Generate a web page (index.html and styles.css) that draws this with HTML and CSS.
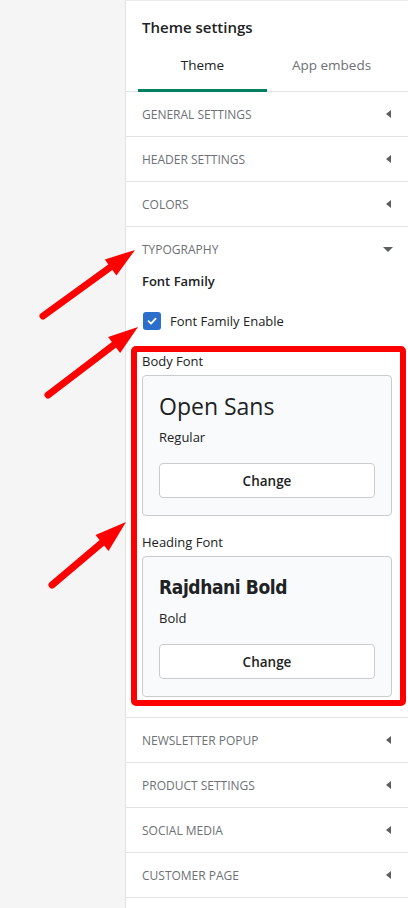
FILE: index.html
```html
<!DOCTYPE html>
<html>
<head>
    <title>Theme settings</title>
    <link rel="stylesheet" href="styles.css">
</head>
<body>
    <div class="page">
        <div class="canvas"></div>

        <aside class="panel">
            <div class="panel-header">
                <h1 class="panel-title">Theme settings</h1>
                <div class="tabs">
                    <div class="tab active">Theme</div>
                    <div class="tab">App embeds</div>
                </div>
            </div>

            <div class="section">
                <div class="section-head"><span>General settings</span><i class="caret"></i></div>
            </div>
            <div class="section">
                <div class="section-head"><span>Header settings</span><i class="caret"></i></div>
            </div>
            <div class="section">
                <div class="section-head"><span>Colors</span><i class="caret"></i></div>
            </div>

            <!-- open section -->
            <div class="section open">
                <div class="section-head"><span>Typography</span><i class="caret down"></i></div>
                <div class="section-body">
                    <div class="field-title">Font Family</div>
                    <label class="checkbox">
                        <span class="box">
                            <svg width="12" height="12" viewBox="0 0 12 12"><path d="M2.5 6.2 L5 8.6 L9.6 3.6" fill="none" stroke="#fff" stroke-width="1.8" stroke-linecap="round" stroke-linejoin="round"/></svg>
                        </span>
                        Font Family Enable
                    </label>

                    <div class="highlight">
                        <div class="font-label">Body Font</div>
                        <div class="font-card">
                            <div class="font-name">Open Sans</div>
                            <div class="font-style">Regular</div>
                            <button class="btn">Change</button>
                        </div>

                        <div class="font-label second">Heading Font</div>
                        <div class="font-card">
                            <div class="font-name heading">Rajdhani Bold</div>
                            <div class="font-style">Bold</div>
                            <button class="btn">Change</button>
                        </div>
                    </div>
                </div>
            </div>

            <div class="section">
                <div class="section-head"><span>Newsletter popup</span><i class="caret"></i></div>
            </div>
            <div class="section">
                <div class="section-head"><span>Product settings</span><i class="caret"></i></div>
            </div>
            <div class="section">
                <div class="section-head"><span>Social media</span><i class="caret"></i></div>
            </div>
            <div class="section">
                <div class="section-head"><span>Customer page</span><i class="caret"></i></div>
            </div>
        </aside>

        <!-- annotation arrows -->
        <svg class="arrows" width="408" height="908" viewBox="0 0 408 908">
            <g stroke="#ff0000" stroke-width="7" stroke-linecap="round" fill="#ff0000">
                <line x1="43" y1="316" x2="112" y2="266"/>
                <line x1="48" y1="395" x2="115" y2="344"/>
                <line x1="52" y1="585" x2="104" y2="541"/>
            </g>
            <g fill="#ff0000">
                <polygon points="135,250 104.8,259.4 116.4,275.6"/>
                <polygon points="138,327 108.1,337.1 120.1,353.1"/>
                <polygon points="126,522 95.5,535 108.5,551"/>
            </g>
        </svg>
    </div>
</body>
</html>
```

FILE: styles.css
```css
body {
    margin: 0;
    font-family: "Open Sans", "Noto Sans", sans-serif;
    color: #202223;
    background-color: #f5f5f5;
}

.page {
    position: relative;
    display: flex;
    width: 408px;
    min-height: 908px;
}

.canvas {
    width: 125px;
    flex-shrink: 0;
}

.panel {
    flex: 1;
    background-color: #fff;
    border-left: 1px solid #e1e3e5;
    border-top: 1px solid #ebebeb;
    min-height: 907px;
}

.panel-header {
    padding-top: 14px;
    border-bottom: 1px solid #e1e3e5;
}

.panel-title {
    margin: 0 0 2px 16px;
    font-size: 15px;
    line-height: 24px;
    font-weight: 600;
}

.tabs {
    display: flex;
    margin: 0 12px;
}

.tab {
    flex: 1;
    height: 48px;
    line-height: 48px;
    text-align: center;
    font-size: 13.5px;
    color: #6d7175;
    border-bottom: 3px solid transparent;
    margin-bottom: -1px;
}

.tab.active {
    color: #202223;
    border-bottom-color: #008060;
}

.section {
    border-bottom: 1px solid #e1e3e5;
}

.section-head {
    display: flex;
    align-items: center;
    justify-content: space-between;
    height: 44px;
    padding: 0 15px 0 16px;
    font-size: 12px;
    text-transform: uppercase;
    color: #6d7175;
}

.caret {
    width: 10px;
    display: flex;
    justify-content: center;
}

.caret::before {
    content: "";
    border-top: 4px solid transparent;
    border-bottom: 4px solid transparent;
    border-right: 5px solid #5c5f62;
}

.caret.down::before {
    border-left: 5px solid transparent;
    border-right: 5px solid transparent;
    border-top: 5px solid #5c5f62;
    border-bottom: 0;
}

.section.open .section-head {
    height: 45px;
}

.section-body {
    padding: 0 16px 11px 16px;
}

.field-title {
    font-size: 13px;
    font-weight: 600;
    line-height: 18px;
}

.checkbox {
    display: flex;
    align-items: center;
    margin-top: 22px;
    font-size: 13px;
    line-height: 18px;
}

.checkbox .box {
    width: 18px;
    height: 18px;
    margin: 0 9px 0 1px;
    border-radius: 3px;
    background-color: #2c6ecb;
    display: flex;
    align-items: center;
    justify-content: center;
}

.highlight {
    margin: 16px -14px 0 -11px;
    padding: 0 8px 3px 5px;
    border: 6px solid #ff0000;
    border-radius: 5px;
}

.font-label {
    font-size: 13px;
    line-height: 18px;
    margin-bottom: 5px;
}

.font-label.second {
    margin-top: 17px;
}

.font-card {
    background-color: #f9fafb;
    border: 1px solid #c9cccf;
    border-radius: 4px;
    padding: 14px 16px 17px 16px;
}

.font-name {
    font-size: 23px;
    line-height: 32px;
    color: #202223;
}

.font-name.heading {
    font-family: "DejaVu Sans Condensed", "DejaVu Sans", sans-serif;
    font-weight: bold;
    font-size: 19px;
    letter-spacing: -0.4px;
}

.font-style {
    font-size: 13px;
    line-height: 18px;
    margin-top: 6px;
}

.btn {
    display: block;
    width: 100%;
    height: 35px;
    margin-top: 17px;
    background-color: #fff;
    border: 1px solid #c9cccf;
    border-radius: 4px;
    font-family: inherit;
    font-size: 13.5px;
    font-weight: 600;
    color: #202223;
}

.arrows {
    position: absolute;
    top: 0;
    left: 0;
    pointer-events: none;
}
```
